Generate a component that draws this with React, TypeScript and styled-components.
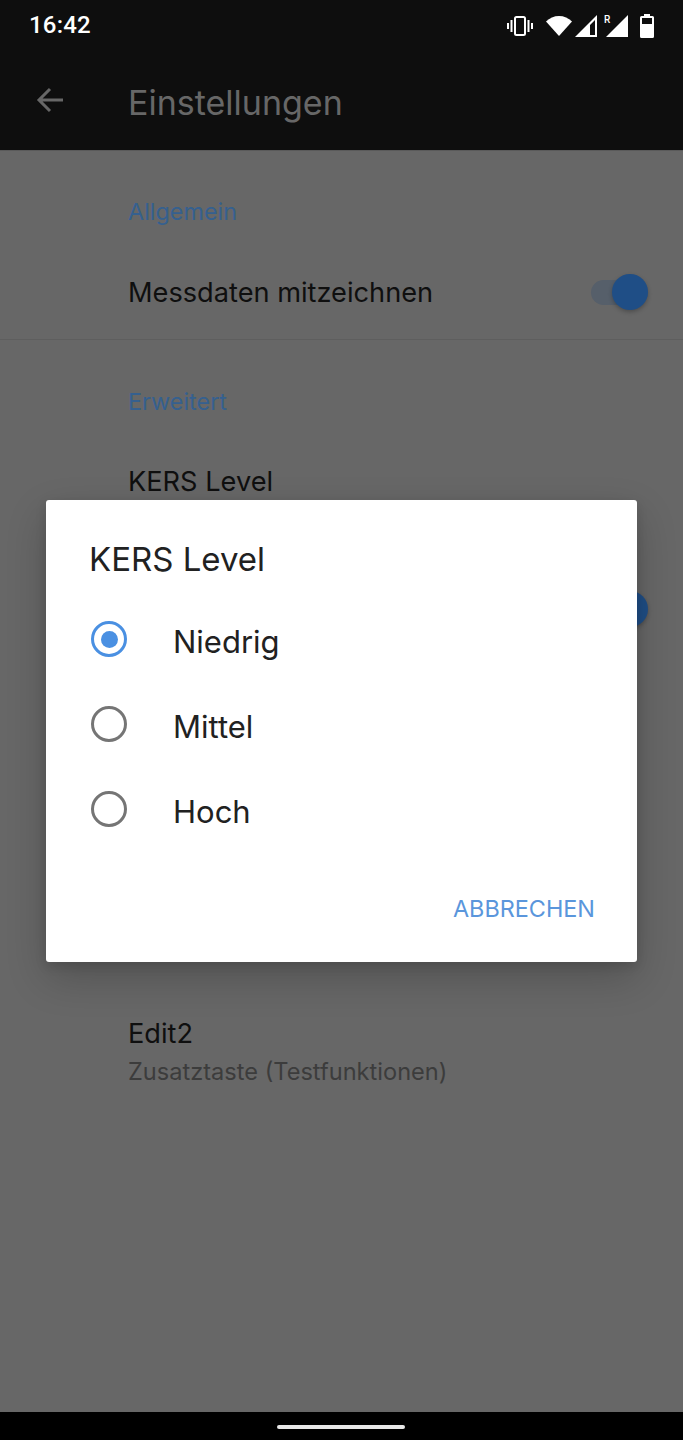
import styled, { createGlobalStyle } from "styled-components";

const GlobalStyle = createGlobalStyle`
  html, body {
    margin: 0;
    padding: 0;
    background: #000;
  }
  * {
    box-sizing: border-box;
  }
`;

const Page = styled.div`
  position: relative;
  width: 683px;
  height: 1440px;
  display: flex;
  flex-direction: column;
  overflow: hidden;
  background: #676767;
  font-family: Inter, Roboto, "Liberation Sans", sans-serif;
`;

const TopArea = styled.header`
  height: 151px;
  display: flex;
  flex-direction: column;
  flex-shrink: 0;
  background: #0e0e0e;
  border-bottom: 1px solid #5a5a5a;
`;

const StatusBar = styled.div`
  height: 50px;
  display: flex;
  align-items: center;
  justify-content: space-between;
  padding: 0 29px;
`;

const Clock = styled.span`
  color: #fff;
  font-family: Roboto, sans-serif;
  font-size: 24px;
  font-weight: 500;
  letter-spacing: 0.2px;
`;

const StatusIcons = styled.div`
  display: flex;
  align-items: center;
  height: 50px;
  padding-top: 1px;
`;

const Toolbar = styled.div`
  flex: 1;
  display: flex;
  align-items: center;
  padding-left: 35px;
`;

const BackButton = styled.svg`
  width: 30px;
  height: 30px;
  margin-right: 63px;
  flex-shrink: 0;
`;

const ToolbarTitle = styled.h1`
  margin: 5px 0 0;
  color: #676767;
  font-size: 34px;
  font-weight: 400;
`;

const Content = styled.main`
  flex: 1;
  display: flex;
  flex-direction: column;
`;

const Section = styled.section<{ $divider?: boolean }>`
  display: flex;
  flex-direction: column;
  border-bottom: ${(p) => (p.$divider ? "1px solid #5e5e5e" : "none")};
`;

const SectionTitle = styled.div<{ $top: number; $bottom: number }>`
  height: 36px;
  margin-top: ${(p) => p.$top}px;
  margin-bottom: ${(p) => p.$bottom}px;
  padding: 0 0 2px 128px;
  display: flex;
  align-items: center;
  color: #35608f;
  font-size: 23.4px;
`;

const Row = styled.div<{ $height: number }>`
  height: ${(p) => p.$height}px;
  display: flex;
  align-items: center;
  justify-content: space-between;
  padding: 0 35px 0 128px;
`;

const ToggleRow = styled(Row)`
  justify-content: flex-end;
`;

const RowText = styled.div`
  display: flex;
  flex-direction: column;
  gap: 10px;
`;

const RowTitle = styled.div`
  color: #0f0f0f;
  font-size: 27.2px;
  line-height: 28px;
`;

const RowSummary = styled.div`
  color: #3c3c3c;
  font-size: 23.6px;
  line-height: 28px;
`;

const Toggle = styled.div`
  position: relative;
  width: 57px;
  height: 25px;
  border-radius: 13px;
  background: #565f6a;
`;

const Thumb = styled.div`
  position: absolute;
  right: 0;
  top: -6px;
  width: 36px;
  height: 36px;
  border-radius: 50%;
  background: #1f4e86;
  box-shadow: 0 2px 4px rgba(0, 0, 0, 0.25);
`;

const BehindDialog = styled.div`
  height: 336px;
`;

const NavBar = styled.footer`
  height: 28px;
  flex-shrink: 0;
  display: flex;
  align-items: center;
  justify-content: center;
  background: #000;
`;

const NavHandle = styled.div`
  width: 128px;
  height: 4px;
  margin-top: 2px;
  margin-right: 1px;
  border-radius: 2px;
  background: #e8e8e8;
`;

const Dialog = styled.div`
  position: absolute;
  left: 46px;
  top: 500px;
  width: 591px;
  height: 462px;
  display: flex;
  flex-direction: column;
  padding: 36px 42px 0 43px;
  background: #fff;
  border-radius: 3px;
  box-shadow: 0 16px 40px rgba(0, 0, 0, 0.2), 0 4px 12px rgba(0, 0, 0, 0.12);
`;

const DialogTitle = styled.h2`
  margin: 0 0 17px;
  height: 46px;
  display: flex;
  align-items: center;
  color: #212121;
  font-size: 33px;
  font-weight: 400;
`;

const Options = styled.div`
  display: flex;
  flex-direction: column;
`;

const Option = styled.div`
  height: 85px;
  display: flex;
  align-items: center;
  gap: 46px;
`;

const Radio = styled.span<{ $checked?: boolean }>`
  width: 36px;
  height: 36px;
  margin-left: 2px;
  margin-top: -5px;
  flex-shrink: 0;
  display: flex;
  align-items: center;
  justify-content: center;
  border-radius: 50%;
  border: 3.5px solid ${(p) => (p.$checked ? "#4a90e2" : "#757575")};
`;

const RadioDot = styled.span`
  width: 17px;
  height: 17px;
  border-radius: 50%;
  background: #4a90e2;
`;

const OptionLabel = styled.span`
  color: #212121;
  font-size: 31px;
`;

const Actions = styled.div`
  display: flex;
  justify-content: flex-end;
  margin-top: 40px;
`;

const CancelButton = styled.span`
  color: #5a96dc;
  font-size: 23.4px;
`;

const options = [
  { label: "Niedrig", checked: true },
  { label: "Mittel", checked: false },
  { label: "Hoch", checked: false },
];

function VibrateIcon() {
  return (
    <svg width="26" height="20" viewBox="0 0 26 20" style={{ marginRight: 13 }}>
      <rect x="8" y="1" width="10" height="18" rx="1.5" fill="none" stroke="#fff" strokeWidth="2" />
      <rect x="3.5" y="4" width="2" height="12" fill="#fff" />
      <rect x="20.5" y="4" width="2" height="12" fill="#fff" />
      <rect x="0" y="7" width="2" height="6" fill="#fff" />
      <rect x="24" y="7" width="2" height="6" fill="#fff" />
    </svg>
  );
}

function WifiIcon() {
  return (
    <svg width="26" height="20" viewBox="0 0 26 20" style={{ marginRight: 3 }}>
      <path d="M0 5.5C3.5 2 8 0 13 0s9.500 2 13 5.500L13 20z" fill="#fff" />
    </svg>
  );
}

function SignalIcon() {
  return (
    <svg width="22" height="22" viewBox="0 0 22 22" style={{ marginRight: 7 }}>
      <path d="M22 0V22H0zM20 5L15 10V20H20z" fill="#fff" fillRule="evenodd" />
    </svg>
  );
}

function RoamingSignalIcon() {
  return (
    <svg width="24" height="22" viewBox="0 0 24 22" style={{ marginRight: 12 }}>
      <text x="0" y="8" fontSize="10" fontWeight="500" fill="#fff" fontFamily="Roboto, sans-serif">
        R
      </text>
      <path d="M24 0V22H2z" fill="#fff" />
    </svg>
  );
}

function BatteryIcon() {
  return (
    <svg width="14" height="24" viewBox="0 0 14 24">
      <path
        d="M4 0H10V2H12.500A1.500 1.500 0 0 1 14 3.500V22.500A1.500 1.500 0 0 1 12.500 24H1.500A1.500 1.500 0 0 1 0 22.500V3.500A1.500 1.500 0 0 1 1.500 2H4zM2 4V10H12V4z"
        fill="#fff"
        fillRule="evenodd"
      />
    </svg>
  );
}

function App() {
  return (
    <>
      <GlobalStyle />
      <Page>
        <TopArea>
          <StatusBar>
            <Clock>16:42</Clock>
            <StatusIcons>
              <VibrateIcon />
              <WifiIcon />
              <SignalIcon />
              <RoamingSignalIcon />
              <BatteryIcon />
            </StatusIcons>
          </StatusBar>
          <Toolbar>
            <BackButton viewBox="0 0 30 30">
              <path d="M28 15H4M15 4L4 15L15 26" fill="none" stroke="#676767" strokeWidth="3" />
            </BackButton>
            <ToolbarTitle>Einstellungen</ToolbarTitle>
          </Toolbar>
        </TopArea>
        <Content>
          <Section $divider>
            <SectionTitle $top={43} $bottom={16}>
              Allgemein
            </SectionTitle>
            <Row $height={93}>
              <RowTitle>Messdaten mitzeichnen</RowTitle>
              <Toggle>
                <Thumb />
              </Toggle>
            </Row>
          </Section>
          <Section>
            <SectionTitle $top={44} $bottom={27}>
              Erweitert
            </SectionTitle>
            <Row $height={108}>
              <RowText>
                <RowTitle>KERS Level</RowTitle>
                <RowSummary>Niedrig</RowSummary>
              </RowText>
            </Row>
            <ToggleRow $height={108}>
              <Toggle>
                <Thumb />
              </Toggle>
            </ToggleRow>
            <BehindDialog />
            <Row $height={108}>
              <RowText>
                <RowTitle>Edit2</RowTitle>
                <RowSummary>Zusatztaste (Testfunktionen)</RowSummary>
              </RowText>
            </Row>
          </Section>
        </Content>
        <NavBar>
          <NavHandle />
        </NavBar>
        <Dialog>
          <DialogTitle>KERS Level</DialogTitle>
          <Options>
            {options.map((option) => (
              <Option key={option.label}>
                <Radio $checked={option.checked}>{option.checked && <RadioDot />}</Radio>
                <OptionLabel>{option.label}</OptionLabel>
              </Option>
            ))}
          </Options>
          <Actions>
            <CancelButton>ABBRECHEN</CancelButton>
          </Actions>
        </Dialog>
      </Page>
    </>
  );
}

export default App;
